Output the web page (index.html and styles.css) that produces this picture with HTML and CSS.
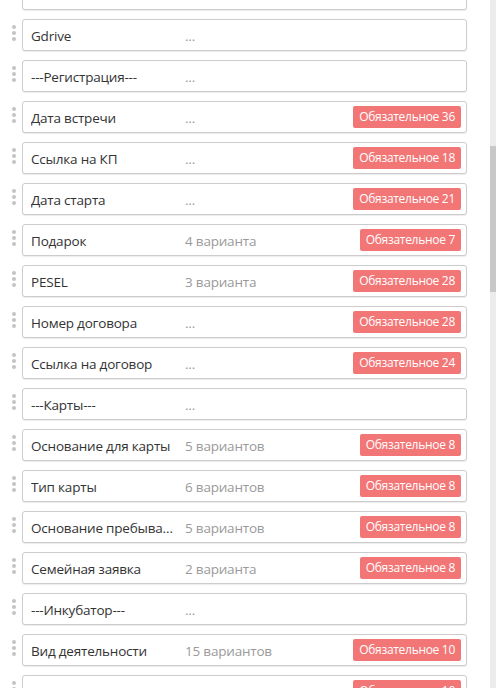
FILE: index.html
```html
<!DOCTYPE html>
<html lang="ru">
<head>
<meta charset="utf-8">
<title>Поля</title>
<link rel="stylesheet" href="styles.css">
</head>
<body>
<div class="page">
  <div class="list">
    <div class="row"><span class="handle"><i></i><i></i><i></i></span><div class="card"><span class="name">Asana</span><span class="meta">...</span></div></div>
    <div class="row"><span class="handle"><i></i><i></i><i></i></span><div class="card"><span class="name">Gdrive</span><span class="meta">...</span></div></div>
    <div class="row"><span class="handle"><i></i><i></i><i></i></span><div class="card"><span class="name">---Регистрация---</span><span class="meta">...</span></div></div>
    <div class="row"><span class="handle"><i></i><i></i><i></i></span><div class="card"><span class="name">Дата встречи</span><span class="meta">...</span><span class="badge">Обязательное 36</span></div></div>
    <div class="row"><span class="handle"><i></i><i></i><i></i></span><div class="card"><span class="name">Ссылка на КП</span><span class="meta">...</span><span class="badge">Обязательное 18</span></div></div>
    <div class="row"><span class="handle"><i></i><i></i><i></i></span><div class="card"><span class="name">Дата старта</span><span class="meta">...</span><span class="badge">Обязательное 21</span></div></div>
    <div class="row"><span class="handle"><i></i><i></i><i></i></span><div class="card"><span class="name">Подарок</span><span class="meta">4 варианта</span><span class="badge">Обязательное 7</span></div></div>
    <div class="row"><span class="handle"><i></i><i></i><i></i></span><div class="card"><span class="name">PESEL</span><span class="meta">3 варианта</span><span class="badge">Обязательное 28</span></div></div>
    <div class="row"><span class="handle"><i></i><i></i><i></i></span><div class="card"><span class="name">Номер договора</span><span class="meta">...</span><span class="badge">Обязательное 28</span></div></div>
    <div class="row"><span class="handle"><i></i><i></i><i></i></span><div class="card"><span class="name">Ссылка на договор</span><span class="meta">...</span><span class="badge">Обязательное 24</span></div></div>
    <div class="row"><span class="handle"><i></i><i></i><i></i></span><div class="card"><span class="name">---Карты---</span><span class="meta">...</span></div></div>
    <div class="row"><span class="handle"><i></i><i></i><i></i></span><div class="card"><span class="name">Основание для карты</span><span class="meta">5 вариантов</span><span class="badge">Обязательное 8</span></div></div>
    <div class="row"><span class="handle"><i></i><i></i><i></i></span><div class="card"><span class="name">Тип карты</span><span class="meta">6 вариантов</span><span class="badge">Обязательное 8</span></div></div>
    <div class="row"><span class="handle"><i></i><i></i><i></i></span><div class="card"><span class="name">Основание пребывания</span><span class="meta">5 вариантов</span><span class="badge">Обязательное 8</span></div></div>
    <div class="row"><span class="handle"><i></i><i></i><i></i></span><div class="card"><span class="name">Семейная заявка</span><span class="meta">2 варианта</span><span class="badge">Обязательное 8</span></div></div>
    <div class="row"><span class="handle"><i></i><i></i><i></i></span><div class="card"><span class="name">---Инкубатор---</span><span class="meta">...</span></div></div>
    <div class="row"><span class="handle"><i></i><i></i><i></i></span><div class="card"><span class="name">Вид деятельности</span><span class="meta">15 вариантов</span><span class="badge">Обязательное 10</span></div></div>
    <div class="row"><span class="handle"><i></i><i></i><i></i></span><div class="card"><span class="name">Город</span><span class="meta">...</span><span class="badge">Обязательное 10</span></div></div>
  </div>
  <div class="scrollbar"><div class="thumb"></div></div>
</div>
</body>
</html>
```

FILE: styles.css
```css
html, body {
  margin: 0;
  padding: 0;
  background: #ffffff;
  overflow: hidden;
}

body {
  font-family: "Open Sans", "Noto Sans", sans-serif;
  color: #333333;
}

.page {
  display: flex;
  width: 496px;
  height: 688px;
  overflow: hidden;
}

.list {
  flex: 1;
  display: flex;
  flex-direction: column;
  gap: 9px;
  margin-top: -22px;
  padding: 0 23px 0 12px;
}

.row {
  display: flex;
  align-items: flex-start;
  gap: 6px;
  flex-shrink: 0;
}

.handle {
  display: flex;
  flex-direction: column;
  gap: 2px;
  width: 4px;
  margin-top: 6px;
}

.handle i {
  display: block;
  width: 4px;
  height: 4px;
  border-radius: 50%;
  background: #c4c4c4;
}

.card {
  flex: 1;
  display: flex;
  align-items: center;
  height: 32px;
  box-sizing: border-box;
  border: 1px solid #cccccc;
  border-radius: 3px;
  box-shadow: 0 1px 1px rgba(0, 0, 0, 0.08);
  padding: 0 5px 0 8px;
  background: #ffffff;
  font-size: 13.5px;
  letter-spacing: -0.2px;
  min-width: 0;
}

.name {
  width: 146px;
  margin-right: 8px;
  margin-top: 2px;
  flex-shrink: 0;
  white-space: nowrap;
  overflow: hidden;
  text-overflow: ellipsis;
  color: #333333;
}

.meta {
  flex: 1;
  margin-top: 2px;
  color: #9a9a9a;
  white-space: nowrap;
}

.badge {
  height: 22px;
  line-height: 22px;
  padding: 0 6px;
  border-radius: 2px;
  background: #f37676;
  color: #ffffff;
  font-size: 12px;
  letter-spacing: -0.3px;
  white-space: nowrap;
}

.scrollbar {
  width: 6px;
  flex-shrink: 0;
  background: #ececec;
  padding-top: 146px;
  box-sizing: border-box;
}

.thumb {
  height: 146px;
  background: #c8c8c8;
}
```
